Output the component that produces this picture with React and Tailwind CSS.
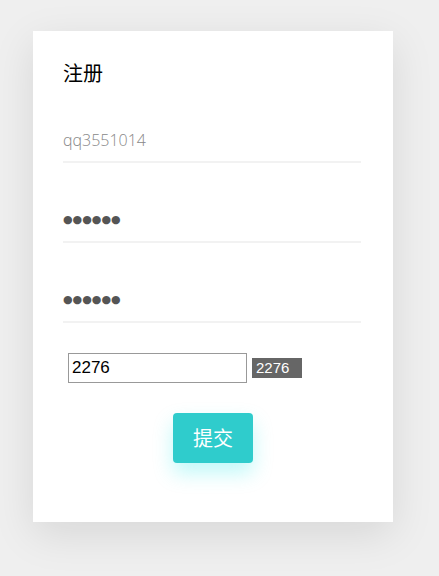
export default function App() {
  return (
    <div className="min-h-[576px] w-full bg-[#efefef] pt-[31px] pl-[33px]" style={{ fontFamily: '"Open Sans", "Noto Sans CJK SC", sans-serif' }}>
      <div className="w-[360px] h-[491px] bg-white shadow-[0_12px_40px_rgba(0,0,0,0.10)] pl-[30px] pr-[32px] pt-[28px]">
        <div className="text-[20px] leading-[28px] text-black" style={{ fontFamily: '"Noto Sans CJK SC", sans-serif' }}>注册</div>
        <div className="mt-[32px] h-[44px] border-b-2 border-[#f2f2f2] flex items-center">
          <span className="text-[16px] font-light text-[#888]">qq3551014</span>
        </div>
        <div className="mt-[36px] h-[44px] border-b-2 border-[#f2f2f2] flex items-center">
          <span className="text-[11px] text-[#555] tracking-[0px]" style={{ fontFamily: '"DejaVu Sans", sans-serif' }}>●●●●●●</span>
        </div>
        <div className="mt-[36px] h-[44px] border-b-2 border-[#f2f2f2] flex items-center">
          <span className="text-[11px] text-[#555] tracking-[0px]" style={{ fontFamily: '"DejaVu Sans", sans-serif' }}>●●●●●●</span>
        </div>
        <div className="mt-[30px] ml-[5px] flex items-center gap-[5px]">
          <div className="w-[179px] h-[30px] border border-[#999] flex items-center px-[3px] text-[17px] text-black" style={{ fontFamily: '"Liberation Sans", sans-serif' }}>2276</div>
          <div className="w-[50px] h-[20px] bg-[#666] text-white text-[15px] leading-[20px] px-[4px]" style={{ fontFamily: '"Liberation Sans", sans-serif' }}>2276</div>
        </div>
        <div className="mt-[30px] flex justify-center">
          <button className="ml-[2px] w-[80px] h-[50px] rounded-[4px] bg-[#2fcccc] text-white text-[20px] shadow-[0_10px_20px_rgba(0,230,230,0.25)]" style={{ fontFamily: '"Noto Sans CJK SC", sans-serif' }}>提交</button>
        </div>
      </div>
    </div>
  );
}
